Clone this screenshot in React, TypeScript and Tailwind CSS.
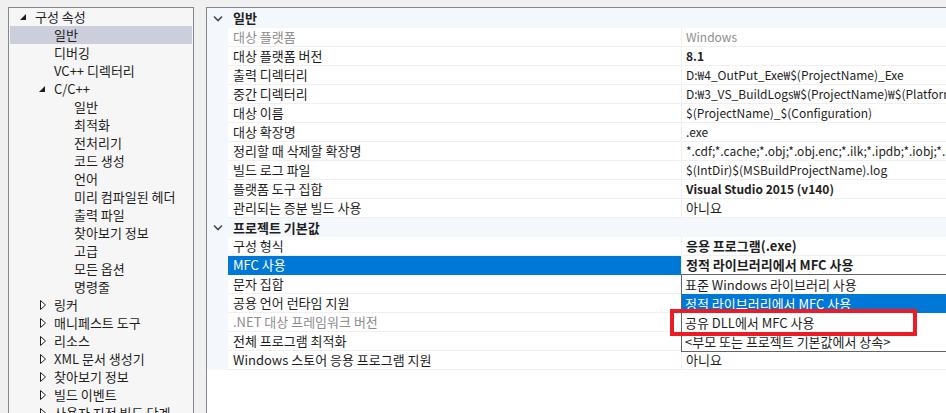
import React from 'react';

type TreeItem = { t: string; l: number; exp?: 'open' | 'closed'; sel?: boolean };

const tree: TreeItem[] = [
  { t: '구성 속성', l: 0, exp: 'open' },
  { t: '일반', l: 1, sel: true },
  { t: '디버깅', l: 1 },
  { t: 'VC++ 디렉터리', l: 1 },
  { t: 'C/C++', l: 1, exp: 'open' },
  { t: '일반', l: 2 },
  { t: '최적화', l: 2 },
  { t: '전처리기', l: 2 },
  { t: '코드 생성', l: 2 },
  { t: '언어', l: 2 },
  { t: '미리 컴파일된 헤더', l: 2 },
  { t: '출력 파일', l: 2 },
  { t: '찾아보기 정보', l: 2 },
  { t: '고급', l: 2 },
  { t: '모든 옵션', l: 2 },
  { t: '명령줄', l: 2 },
  { t: '링커', l: 1, exp: 'closed' },
  { t: '매니페스트 도구', l: 1, exp: 'closed' },
  { t: '리소스', l: 1, exp: 'closed' },
  { t: 'XML 문서 생성기', l: 1, exp: 'closed' },
  { t: '찾아보기 정보', l: 1, exp: 'closed' },
  { t: '빌드 이벤트', l: 1, exp: 'closed' },
  { t: '사용자 지정 빌드 단계', l: 1, exp: 'closed' },
];

type GridRow = {
  h?: string;
  n?: string;
  v?: string;
  dim?: boolean;
  vdim?: boolean;
  bold?: boolean;
  sel?: boolean;
  ko?: boolean; // value is mostly hangul
};

// values under the open dropdown are hidden in the screenshot, so left empty
const rows: GridRow[] = [
  { h: '일반' },
  { n: '대상 플랫폼', v: 'Windows', dim: true, vdim: true },
  { n: '대상 플랫폼 버전', v: '8.1', bold: true },
  { n: '출력 디렉터리', v: 'D:₩4_OutPut_Exe₩$(ProjectName)_Exe' },
  { n: '중간 디렉터리', v: 'D:₩3_VS_BuildLogs₩$(ProjectName)₩$(Platform)' },
  { n: '대상 이름', v: '$(ProjectName)_$(Configuration)' },
  { n: '대상 확장명', v: '.exe' },
  { n: '정리할 때 삭제할 확장명', v: '*.cdf;*.cache;*.obj;*.obj.enc;*.ilk;*.ipdb;*.iobj;*.res' },
  { n: '빌드 로그 파일', v: '$(IntDir)$(MSBuildProjectName).log' },
  { n: '플랫폼 도구 집합', v: 'Visual Studio 2015 (v140)', bold: true },
  { n: '관리되는 증분 빌드 사용', v: '아니요', ko: true },
  { h: '프로젝트 기본값' },
  { n: '구성 형식', v: '응용 프로그램(.exe)', bold: true, ko: true },
  { n: 'MFC 사용', v: '정적 라이브러리에서 MFC 사용', bold: true, sel: true, ko: true },
  { n: '문자 집합', v: '' },
  { n: '공용 언어 런타임 지원', v: '' },
  { n: '.NET 대상 프레임워크 버전', v: '', dim: true },
  { n: '전체 프로그램 최적화', v: '' },
  { n: 'Windows 스토어 응용 프로그램 지원', v: '아니요', ko: true },
];

const options = [
  '표준 Windows 라이브러리 사용',
  '정적 라이브러리에서 MFC 사용',
  '공유 DLL에서 MFC 사용',
  '<부모 또는 프로젝트 기본값에서 상속>',
];

const Expander = ({ exp }: { exp?: 'open' | 'closed' }) => (
  <div className="w-[15px] h-full flex items-center shrink-0">
    {exp === 'open' && (
      <svg width="6" height="6" viewBox="0 0 6 6" className="-mt-[1px]">
        <polygon points="6,0 6,6 0,6" fill="#1e1e1e" />
      </svg>
    )}
    {exp === 'closed' && (
      <svg width="7" height="10" viewBox="0 0 7 10" className="ml-[1px]">
        <polygon points="0.5,0.5 5.5,5 0.5,9.5" fill="#ffffff" stroke="#1e1e1e" strokeWidth="1" />
      </svg>
    )}
  </div>
);

const indent = ['pl-[10px]', 'pl-[29px]', 'pl-[49px]'];

const Chevron = () => (
  <svg width="10" height="7" viewBox="0 0 10 7">
    <polyline points="1,1.5 5,5.5 9,1.5" fill="none" stroke="#4a4a4a" strokeWidth="1.6" />
  </svg>
);

export default function App() {
  return (
    <div className="relative w-[946px] h-[413px] overflow-hidden bg-[#f0f0f0] flex gap-[12px] pt-[7px] pl-[8px] text-[13px] text-[#1e1e1e] font-[Noto_Sans_CJK_KR,sans-serif]">
      {/* tree */}
      <div className="w-[186px] h-[420px] shrink-0 border border-b-0 border-[#828790] bg-[#f6f6f6] px-[1px] overflow-hidden">
        {tree.map((it, i) => (
          <div
            key={i}
            className={`h-[18px] flex items-center whitespace-nowrap ${indent[it.l]} ${it.sel ? 'bg-[#cccedb]' : ''}`}
          >
            <Expander exp={it.exp} />
            <span>{it.t}</span>
          </div>
        ))}
      </div>

      {/* property grid */}
      <div className="relative flex-1 min-w-0 h-[420px] border-l border-t border-[#828790] bg-white">
        {rows.map((r, i) =>
          r.h ? (
            <div key={i} className={`${i === 0 ? 'h-[20px]' : 'h-[19px]'} flex items-center bg-[#f4f7fb]`}>
              <div className="w-[21px] flex justify-center pl-[1px]">
                <Chevron />
              </div>
              <span className="pl-[5px] font-bold">{r.h}</span>
            </div>
          ) : (
            <div key={i} className="h-[19px] flex">
              <div className="w-[21px] shrink-0 bg-[#f4f7fb]" />
              <div
                className={`w-[453px] shrink-0 flex items-center pl-[5px] border-b whitespace-nowrap ${
                  r.sel ? 'bg-[#0078d7] text-white border-[#0078d7]' : 'border-[#f0f0f0]'
                } ${r.dim ? 'text-[#8d8d8d]' : ''}`}
              >
                {r.n}
              </div>
              <div
                className={`flex-1 min-w-0 flex items-center pl-[4px] border-l border-b border-[#f0f0f0] whitespace-nowrap overflow-hidden ${
                  r.ko ? 'text-[13px]' : 'text-[12px]'
                } ${r.bold ? 'font-bold' : ''} ${r.vdim ? 'text-[#8d8d8d]' : ''}`}
              >
                {r.v}
              </div>
            </div>
          )
        )}

        {/* dropdown list */}
        <div className="absolute left-[474px] top-[266px] right-[-2px] border border-[#646464] bg-white">
          {options.map((o, i) => (
            <div
              key={i}
              className={`h-[19px] flex items-center pl-[3px] whitespace-nowrap ${
                i === 1 ? 'bg-[#0078d7] text-white' : ''
              }`}
            >
              {o}
            </div>
          ))}
        </div>
      </div>

      {/* red annotation */}
      <div className="absolute left-[670px] top-[309px] w-[247px] h-[27px] border-[4px] border-[#ed1c24]" />
    </div>
  );
}
